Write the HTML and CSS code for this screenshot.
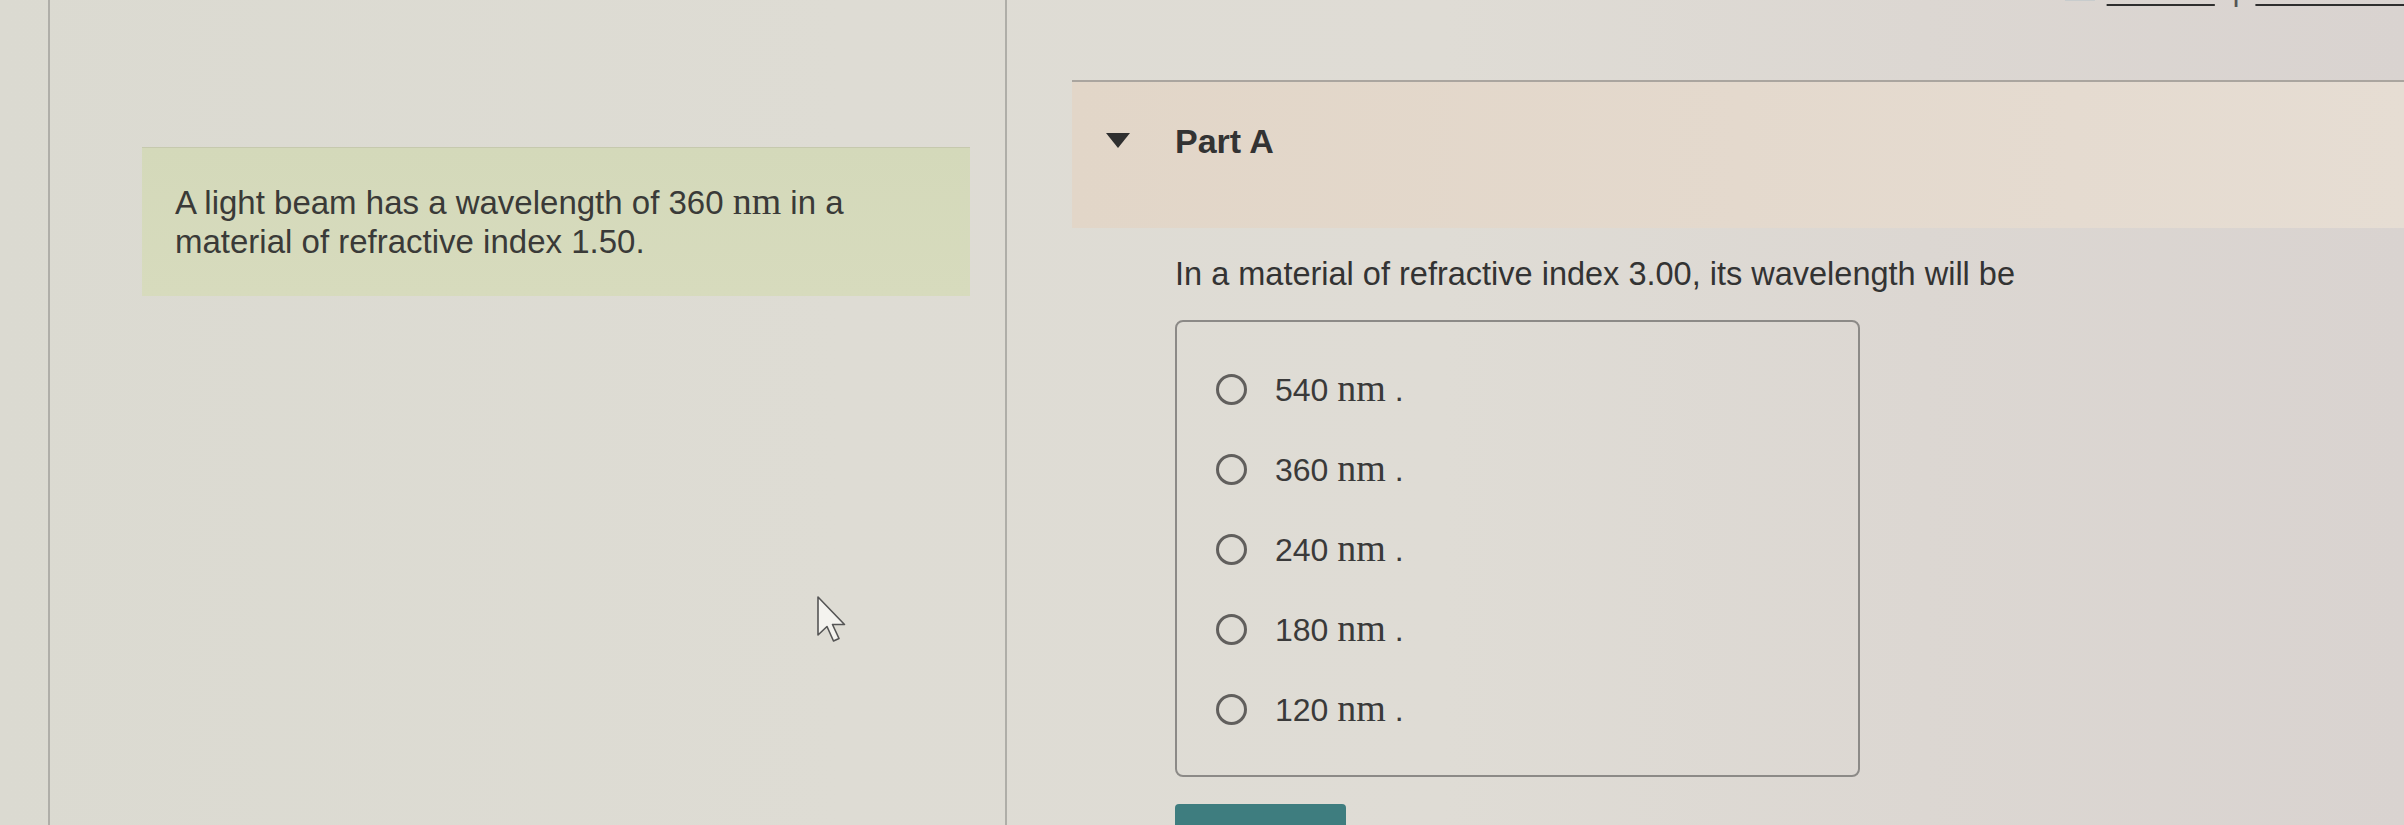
FILE: index.html
```html
<!DOCTYPE html>
<html lang="en">
<head>
<meta charset="utf-8">
<title>Part A</title>
<link rel="stylesheet" href="styles.css">
</head>
<body>
<div class="page">
  <div class="gutter"></div>
  <div class="vline"></div>
  <section class="left">
    <div class="problem">A light beam has a wavelength of 360&nbsp;<span class="unit">nm</span> in a material of refractive index 1.50.</div>
  </section>
  <div class="vline"></div>
  <section class="right">
    <nav class="toplinks">
      <span class="tl-icon"></span>
      <a class="tl-link" href="#">Review</a>
      <span class="tl-sep">|</span>
      <a class="tl-link" href="#">Constants</a>
    </nav>
    <header class="part">
      <span class="caret"></span>
      <h2 class="part-title">Part A</h2>
    </header>
    <div class="content">
      <p class="question">In a material of refractive index 3.00, its wavelength will be</p>
      <div class="choices">
        <label class="choice"><span class="radio"></span><span class="opt">540 <span class="unit">nm</span> .</span></label>
        <label class="choice"><span class="radio"></span><span class="opt">360 <span class="unit">nm</span> .</span></label>
        <label class="choice"><span class="radio"></span><span class="opt">240 <span class="unit">nm</span> .</span></label>
        <label class="choice"><span class="radio"></span><span class="opt">180 <span class="unit">nm</span> .</span></label>
        <label class="choice"><span class="radio"></span><span class="opt">120 <span class="unit">nm</span> .</span></label>
      </div>
      <button class="submit" type="button">Submit</button>
    </div>
  </section>
</div>
<svg class="cursor" width="34" height="50" viewBox="0 0 34 50" aria-hidden="true">
  <path d="M2 2 L2 40 L11 31.5 L17.5 46 L23 43.5 L16.5 29.5 L28.5 29.5 Z" fill="#f4f3ef" stroke="#555" stroke-width="1.6" stroke-linejoin="round"/>
</svg>
</body>
</html>
```

FILE: styles.css
```css
html, body {
  margin: 0;
  padding: 0;
}

body {
  width: 2404px;
  height: 825px;
  overflow: hidden;
  position: relative;
  font-family: "Liberation Sans", Arial, sans-serif;
  color: #363535;
  background: linear-gradient(90deg, #dbdad1 0%, #dedcd4 35%, #dfdcd5 60%, #dcd7d2 80%, #d9d3d0 100%);
}

.page {
  display: grid;
  grid-template-columns: 48px 2px 955px 2px 1fr;
  height: 825px;
}

.vline {
  background: #afaea8;
}

/* Left panel */
.left {
  padding: 147px 0 0 92px;
}

.problem {
  width: 828px;
  height: 149px;
  box-sizing: border-box;
  padding: 35px 110px 0 33px;
  background: linear-gradient(180deg, #d4d9ba 0%, #d7dbbd 100%);
  border-top: 1px solid #c6c9ae;
  font-size: 33px;
  line-height: 39px;
  color: #3a3a38;
}

.unit {
  font-family: "Liberation Serif", "Times New Roman", serif;
  font-size: 1.15em;
  line-height: 1;
}

/* Right panel */
.right {
  min-width: 0;
}

.toplinks {
  display: flex;
  justify-content: flex-end;
  align-items: flex-end;
  margin-top: -31px;
  height: 40px;
  font-size: 33px;
  line-height: 40px;
  white-space: nowrap;
}

.tl-icon {
  width: 30px;
  height: 30px;
  margin-bottom: 8px;
  margin-right: 12px;
  background: #c8cccd;
}

.tl-link {
  color: #2e2e2e;
  text-decoration: underline;
  text-decoration-thickness: 2px;
  text-underline-offset: 4px;
}

.tl-sep {
  color: #555;
  margin: 0 15px 0 17px;
}

.part {
  display: flex;
  align-items: flex-start;
  margin: 71px 0 0 65px;
  height: 107px;
  padding: 39px 0 0 34px;
  border-top: 2px solid #aaa59f;
  background: linear-gradient(90deg, #e2d6c8 0%, #e4d9cd 50%, #e6ddd3 100%);
}

.caret {
  width: 0;
  height: 0;
  margin-top: 12px;
  border-left: 12px solid transparent;
  border-right: 12px solid transparent;
  border-top: 15px solid #2f2f2f;
}

.part-title {
  margin: 0 0 0 45px;
  font-size: 34px;
  line-height: 40px;
  font-weight: bold;
  color: #333;
}

.content {
  padding-left: 168px;
}

.question {
  margin: 26px 0 0;
  font-size: 32.5px;
  line-height: 40px;
  color: #333;
}

.choices {
  margin-top: 26px;
  width: 642px;
  border: 2px solid #8c8a87;
  border-radius: 8px;
  padding: 27px 0 26px 39px;
}

.choice {
  display: flex;
  align-items: center;
  height: 80px;
  gap: 28px;
}

.radio {
  width: 25px;
  height: 25px;
  border: 3px solid #615f5d;
  border-radius: 50%;
  flex: none;
}

.opt {
  font-size: 32px;
  line-height: 40px;
  color: #3a3a3a;
  white-space: nowrap;
}

.opt .unit {
  font-size: 38px;
}

.submit {
  display: block;
  margin-top: 27px;
  width: 171px;
  height: 60px;
  padding: 12px 0 0;
  border: 0;
  border-radius: 4px 4px 0 0;
  background: #3e7d7f;
  color: #ffffff;
  font-family: "Liberation Sans", Arial, sans-serif;
  font-size: 32px;
  line-height: 40px;
  text-align: center;
  align-content: start;
}

.cursor {
  position: absolute;
  left: 816px;
  top: 595px;
}
```
